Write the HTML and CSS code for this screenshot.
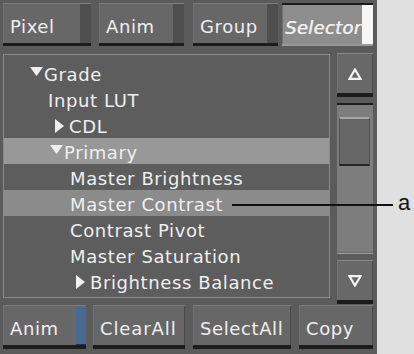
FILE: index.html
```html
<!DOCTYPE html>
<html>
<head>
<meta charset="utf-8">
<link rel="stylesheet" href="styles.css">
</head>
<body>
<div class="stage">
  <div class="panel">
    <div class="toprow">
      <div class="btn w-pixel"><span class="face">Pixel</span><span class="strip"></span></div>
      <div class="btn w-anim"><span class="face">Anim</span><span class="strip"></span></div>
      <div class="btn w-group"><span class="face">Group</span><span class="strip"></span></div>
      <div class="btn sel w-sel"><span class="face">Selector</span><span class="strip white"></span></div>
    </div>
    <div class="middle">
      <div class="list">
        <div class="row ind1"><svg class="tri-d" width="13" height="9" viewBox="0 0 13 9"><path d="M0 0H13L6.5 9Z" fill="#f0f0f0"/></svg>Grade</div>
        <div class="row ind2">Input LUT</div>
        <div class="row ind3"><svg class="tri-r" width="9" height="14" viewBox="0 0 9 14"><path d="M0 0V14L9 7Z" fill="#f0f0f0"/></svg>CDL</div>
        <div class="row ind4 hl1"><svg class="tri-d" width="13" height="9" viewBox="0 0 13 9"><path d="M0 0H13L6.5 9Z" fill="#f0f0f0"/></svg>Primary</div>
        <div class="row ind5">Master Brightness</div>
        <div class="row ind5 hl2">Master Contrast</div>
        <div class="row ind5">Contrast Pivot</div>
        <div class="row ind5">Master Saturation</div>
        <div class="row ind6"><svg class="tri-r" width="9" height="14" viewBox="0 0 9 14"><path d="M0 0V14L9 7Z" fill="#f0f0f0"/></svg>Brightness Balance</div>
      </div>
      <div class="scroll">
        <div class="sbtn"><svg width="14" height="12" viewBox="0 0 14 12"><path d="M7 1.5L12.5 10.8H1.5Z" fill="none" stroke="#f4f4f4" stroke-width="2.2" stroke-linejoin="miter"/></svg></div>
        <div class="trough"><div class="thumb"></div></div>
        <div class="sbtn"><svg width="14" height="12" viewBox="0 0 14 12"><path d="M7 10.5L12.5 1.2H1.5Z" fill="none" stroke="#f4f4f4" stroke-width="2.2" stroke-linejoin="miter"/></svg></div>
      </div>
    </div>
    <div class="botrow">
      <div class="btn w-banim"><span class="face">Anim</span><span class="strip blue"></span></div>
      <div class="btn w-clear"><span class="face">ClearAll</span></div>
      <div class="btn w-selall"><span class="face">SelectAll</span></div>
      <div class="btn w-copy"><span class="face">Copy</span></div>
    </div>
  </div>
  <div class="callout">
    <span class="leader"></span><span class="letter">a</span>
  </div>
</div>
</body>
</html>
```

FILE: styles.css
```css
* { box-sizing: border-box; }
html, body { margin: 0; padding: 0; }
body {
  background: #e0e0e0;
  width: 414px;
  height: 354px;
  overflow: hidden;
  font-family: "DejaVu Sans", sans-serif;
}
.stage { display: flex; width: 414px; height: 354px; position: relative; }
.panel {
  width: 377px;
  height: 354px;
  background: #5b5b5b;
  padding: 3px 4px 0 3px;
  display: flex;
  flex-direction: column;
}
.toprow { display: flex; height: 43px; }
.w-pixel { width: 88px; margin-right: 8px; }
.w-anim { width: 85px; margin-right: 9px; }
.w-group { width: 85px; margin-right: 4px; }
.w-sel { width: 91px; }
.btn {
  display: flex;
  height: 43px;
  background: #676767;
  border-top: 1px solid #7c7c7c;
  border-bottom: 3px solid #1c1c1c;
  box-shadow: inset 1px 0 0 #707070, inset -1px 0 0 #4a4a4a;
  color: #efefef;
  font-size: 18px;
  letter-spacing: 0.6px;
}
.btn .face {
  flex: 1;
  display: flex;
  align-items: center;
  padding-left: 7px;
  padding-top: 5px;
}
.btn .strip { width: 11px; background: #4e4e4e; }
.btn .strip.white { background: #f6f6f6; }
.btn .strip.blue { width: 10px; background: #4a6890; border-bottom: 1px solid #1f2d60; }
.btn.sel { background: #8d8d8d; border-top-color: #1c1c1c; border-bottom-color: #9a9a9a; border-top-width: 2px; border-bottom-width: 2px; }
.btn.sel .face { font-style: italic; padding-left: 3px; font-size: 18px; letter-spacing: 0.3px; text-shadow: 0.4px 0 0 #efefef; }

.middle { display: flex; margin-top: 8px; height: 244px; }
.list {
  width: 327px;
  height: 244px;
  border: 1px solid #8a8a8a;
  background: #5d5d5d;
  padding-top: 5px;
}
.row {
  height: 26px;
  display: flex;
  align-items: center;
  color: #efefef;
  font-size: 18px;
  letter-spacing: 0.6px;
  white-space: nowrap;
  padding-top: 3px;
}
.hl1 { background: #989898; }
.hl2 { background: #8b8b8b; }
.ind1 { padding-left: 26px; }
.ind2 { padding-left: 44px; }
.ind3 { padding-left: 51px; }
.ind4 { padding-left: 46px; }
.ind5 { padding-left: 66px; }
.ind6 { padding-left: 72px; }
.tri-d { margin-right: 1px; margin-bottom: 6px; }
.tri-r { margin-right: 5px; margin-bottom: 2px; }

.scroll { width: 36px; margin-left: 7px; display: flex; flex-direction: column; margin-top: -1px; }
.sbtn {
  height: 44px;
  background: #686868;
  border-top: 1px solid #888;
  border-bottom: 4px solid #1c1c1c;
  display: flex;
  align-items: center;
  justify-content: center;
  box-shadow: inset 1px 0 0 #727272, inset -1px 0 0 #4c4c4c;
  flex: none;
}
.trough {
  flex: none;
  margin-top: 6px;
  height: 151px;
  margin-bottom: 6px;
  border-top: 2px solid #1e1e1e;
  background: #7d7d7d;
  padding: 12px 3px 0 2px;
  box-shadow: inset 0 -1px 0 #a0a0a0, inset 0 -2px 0 #6a6a6a;
}
.thumb {
  height: 49px;
  background: #666;
  border-top: 2px solid #a6a6a6;
  border-bottom: 2px solid #262626;
  border-left: 1px solid #4e4e4e;
  border-right: 1px solid #4e4e4e;
}

.botrow { display: flex; margin-top: 7px; height: 44px; }
.botrow .btn { height: 44px; border-bottom-width: 4px; }
.w-banim { width: 83px; margin-right: 7px; }
.w-clear { width: 92px; margin-right: 8px; }
.w-selall { width: 98px; margin-right: 8px; }
.w-copy { width: 74px; }
.botrow .btn .face { padding-left: 7px; }
.w-copy .face { padding-left: 11px; }
.w-clear .face { letter-spacing: 0.9px; }

.callout {
  position: absolute;
  left: 232px;
  top: 193px;
  display: flex;
  align-items: center;
  height: 24px;
}
.leader { width: 161px; height: 2px; background: #111; display: block; }
.letter {
  font-family: "Liberation Sans", Arial, sans-serif;
  font-size: 22px;
  color: #111;
  margin-left: 5px;
  margin-top: -4px;
}
```
